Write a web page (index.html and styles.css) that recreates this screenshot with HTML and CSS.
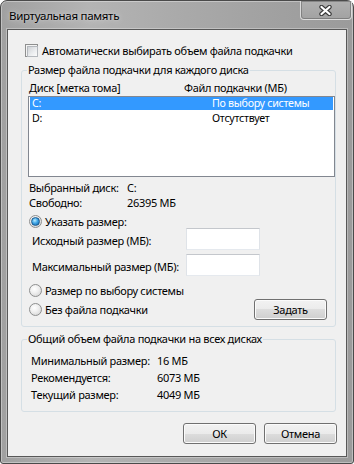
FILE: index.html
```html
<!DOCTYPE html>
<html lang="ru">
<head>
<meta charset="utf-8">
<title>Виртуальная память</title>
<link rel="stylesheet" href="styles.css">
</head>
<body>
<div class="window">
  <div class="titlebar">
    <span class="title">Виртуальная память</span>
    <button class="close" type="button" aria-label="Закрыть">
      <svg width="13" height="11" viewBox="0 0 13 11">
        <path d="M2.5 2 L10.5 9 M10.5 2 L2.5 9" stroke="#3a3a3a" stroke-width="4.4" stroke-linecap="round" fill="none"/>
        <path d="M2.5 2 L10.5 9 M10.5 2 L2.5 9" stroke="#ffffff" stroke-width="2.3" stroke-linecap="round" fill="none"/>
      </svg>
    </button>
  </div>
  <div class="client">
    <div class="check-row"><span class="checkbox"></span><span>Автоматически выбирать объем файла подкачки</span></div>

    <fieldset class="group group-drives">
      <legend>Размер файла подкачки для каждого диска</legend>
      <div class="list-head"><span class="col1">Диск [метка тома]</span><span>Файл подкачки (МБ)</span></div>
      <div class="listbox">
        <div class="list-row selected"><span class="col1">C:</span><span class="col2">По выбору системы</span></div>
        <div class="list-row"><span class="col1">D:</span><span class="col2">Отсутствует</span></div>
      </div>
      <div class="info">
        <span>Выбранный диск:</span><span>C:</span>
        <span>Свободно:</span><span>26395 МБ</span>
      </div>
      <div class="radio-row first"><span class="radio checked"></span><span>Указать размер:</span></div>
      <div class="field-row"><span class="field-label">Исходный размер (МБ):</span><span class="input"></span></div>
      <div class="field-row second"><span class="field-label">Максимальный размер (МБ):</span><span class="input"></span></div>
      <div class="radio-row middle"><span class="radio"></span><span>Размер по выбору системы</span></div>
      <div class="radio-row last"><span class="radio"></span><span>Без файла подкачки</span><button class="btn btn-set" type="button">Задать</button></div>
    </fieldset>

    <fieldset class="group group-total">
      <legend>Общий объем файла подкачки на всех дисках</legend>
      <div class="totals">
        <span>Минимальный размер:</span><span>16 МБ</span>
        <span>Рекомендуется:</span><span>6073 МБ</span>
        <span>Текущий размер:</span><span>4049 МБ</span>
      </div>
    </fieldset>

    <div class="actions">
      <button class="btn" type="button">ОК</button>
      <button class="btn" type="button">Отмена</button>
    </div>
  </div>
</div>
</body>
</html>
```

FILE: styles.css
```css
* { box-sizing: border-box; }
html, body { margin: 0; padding: 0; }
body {
  width: 354px;
  height: 464px;
  overflow: hidden;
  background: #ffffff;
  font-family: "Noto Sans", "Open Sans", sans-serif;
  font-size: 11px;
  letter-spacing: -0.3px;
  white-space: nowrap;
  color: #000;
}

.window {
  width: 354px;
  height: 464px;
  border: 1px solid #4a4a4a;
  border-radius: 7px 7px 3px 3px;
  background: linear-gradient(to right, #a0a0a0 0%, #b4b4b4 25%, #aaaaaa 50%, #a0a0a0 80%, #9b9b9b 100%);
  box-shadow: inset 0 0 0 1px rgba(255,255,255,0.35);
  display: flex;
  flex-direction: column;
}

.titlebar {
  height: 28px;
  display: flex;
  align-items: flex-start;
}
.title {
  padding-left: 8px;
  line-height: 29px;
  font-size: 11.5px;
  text-shadow: 0 0 7px rgba(255,255,255,0.55), 0 0 2px rgba(255,255,255,0.4);
}
.close {
  margin-left: auto;
  margin-right: 1px;
  width: 52px;
  height: 19px;
  padding: 0;
  border: 1px solid rgba(235,235,235,0.75);
  border-top: none;
  border-radius: 0 0 4px 4px;
  background: linear-gradient(#b0b0b0, #a2a2a2);
  box-shadow: inset 0 0 0 1px rgba(60,60,60,0.35);
  display: flex;
  align-items: center;
  justify-content: center;
}
.close svg { display: block; margin-left: -2px; }

.client {
  flex: 1;
  margin: 0 6px 6px;
  border: 1px solid #585858;
  box-shadow: 0 0 0 1px rgba(255,255,255,0.3);
  background: #f0f0f0;
  display: flex;
  flex-direction: column;
}

.check-row {
  margin: 14px 0 0 17px;
  height: 13px;
  display: flex;
  align-items: center;
  gap: 4px;
  line-height: 13px;
}
.checkbox {
  width: 13px;
  height: 13px;
  border: 1px solid #8e8f8f;
  background: #f4f4f4;
  padding: 1px;
  flex: none;
}
.checkbox::before {
  content: "";
  display: block;
  width: 100%;
  height: 100%;
  border: 1px solid #b4b8bd;
  background: linear-gradient(135deg, #cfd2d6 0%, #eceef0 60%, #fbfbfb 100%);
}

.group {
  margin: 6px 10px 0 13px;
  padding: 0 0 6px 0;
  border: 1px solid #d5dfe5;
  border-radius: 3px;
  min-width: 0;
}
.group legend {
  margin-left: 5px;
  padding: 0 1px;
  line-height: 14px;
}

.list-head {
  display: flex;
  margin: 3px 0 0 7px;
  line-height: 15px;
}
.list-head .col1 { width: 155px; }

.listbox {
  margin: 1px 0 0 6px;
  width: 307px;
  height: 81px;
  border: 1px solid #828790;
  background: #fff;
}
.list-row {
  display: flex;
  height: 14px;
  line-height: 14px;
  padding-left: 2px;
  margin: 0 1px;
  font-size: 10.7px;
}
.list-row .col1 { width: 180px; }
.list-row.selected {
  color: #fff;
  background: linear-gradient(#3399ff 0, #3399ff 13px, transparent 13px);
  line-height: 13px;
}

.info {
  display: grid;
  grid-template-columns: 98px auto;
  margin: 3px 0 0 7px;
  line-height: 15px;
}

.radio-row {
  display: flex;
  align-items: center;
  gap: 3px;
  margin-left: 7px;
}
.radio-row.first { margin-top: 5px; height: 13px; }
.radio-row.middle { margin-top: 7px; height: 14px; }
.radio-row.last { margin-top: 2px; height: 21px; }

.radio {
  width: 13px;
  height: 13px;
  border-radius: 50%;
  border: 1px solid #8e8f8f;
  background: radial-gradient(circle at 40% 35%, #ffffff 0%, #f0f0f0 40%, #cfcfcf 100%);
  flex: none;
  display: flex;
  align-items: center;
  justify-content: center;
}
.radio.checked::after {
  content: "";
  width: 7px;
  height: 7px;
  border-radius: 50%;
  border: 1px solid #1d5a8d;
  background: radial-gradient(circle at 40% 35%, #b8ecff 0%, #3fa5e6 45%, #0f5fa3 100%);
}

.field-row {
  display: flex;
  align-items: center;
  height: 22px;
  margin-left: 10px;
}
.field-row.second { margin-top: 4px; }
.field-label { width: 154px; padding-top: 2px; }
.input {
  width: 74px;
  height: 22px;
  background: #fff;
  border: 1px solid;
  border-color: #c4c7cc #dfe3e8 #e5e9ee #dfe3e8;
}

.btn {
  width: 73px;
  height: 21px;
  padding: 0;
  font-family: inherit;
  font-size: 11px;
  letter-spacing: -0.3px;
  color: #000;
  border: 1px solid #707070;
  border-radius: 3px;
  background: linear-gradient(#f2f2f2 0%, #ebebeb 50%, #dddddd 50%, #cfcfcf 100%);
  box-shadow: inset 0 0 0 1px #fbfbfb;
}
.btn-set { margin-left: auto; margin-right: 8px; }

.group-total { margin-top: 5px; padding-bottom: 8px; }
.totals {
  display: grid;
  grid-template-columns: 126px auto;
  margin: 6px 0 0 9px;
  line-height: 17px;
}

.actions {
  display: flex;
  justify-content: flex-end;
  gap: 8px;
  margin-top: 11px;
  padding-right: 9px;
}
```
